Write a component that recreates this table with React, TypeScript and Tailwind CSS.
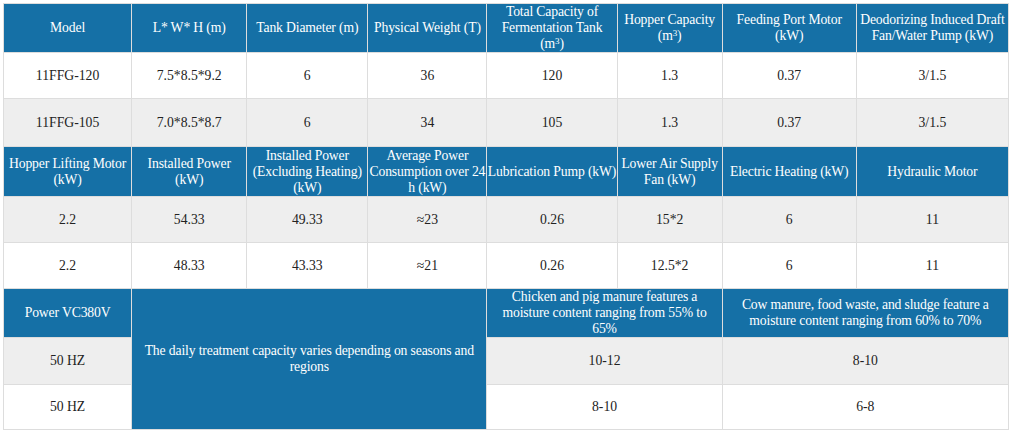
const head = "bg-[#1570a6] text-white border border-[#dddddd] text-center align-middle font-normal px-0 tracking-[-0.15px]";
const cell = "border border-[#dddddd] text-center align-middle text-[#222222] px-0";

const widths = [128, 115, 121, 119, 130, 105, 134, 152];

const Sup = () => (
  <>
    m<sup className="text-[9px] leading-none">3</sup>
  </>
);

export default function App() {
  return (
    <div className="bg-white w-[1014px] h-[433px] pl-[3px] pt-[3px] font-[family-name:'Liberation_Serif',serif] text-[13.7px] leading-[16px]">
      <table className="table-fixed border-collapse w-[1006px]">
        <colgroup>
          {widths.map((w, i) => (
            <col key={i} style={{ width: w }} />
          ))}
        </colgroup>
        <tbody>
          <tr className="h-[48px]">
            <th className={head}>Model</th>
            <th className={head}>L* W* H (m)</th>
            <th className={head}>Tank Diameter (m)</th>
            <th className={head}>Physical Weight (T)</th>
            <th className={`${head} px-2`}>
              Total Capacity of Fermentation Tank (<Sup />)
            </th>
            <th className={head}>
              Hopper Capacity (<Sup />)
            </th>
            <th className={head}>Feeding Port Motor (kW)</th>
            <th className={head}>Deodorizing Induced Draft Fan/Water Pump (kW)</th>
          </tr>
          <tr className="h-[46px] bg-white">
            {["11FFG-120", "7.5*8.5*9.2", "6", "36", "120", "1.3", "0.37", "3/1.5"].map((v, i) => (
              <td key={i} className={cell}>{v}</td>
            ))}
          </tr>
          <tr className="h-[48px] bg-[#eeeeee]">
            {["11FFG-105", "7.0*8.5*8.7", "6", "34", "105", "1.3", "0.37", "3/1.5"].map((v, i) => (
              <td key={i} className={cell}>{v}</td>
            ))}
          </tr>
          <tr className="h-[50px]">
            <th className={head}>Hopper Lifting Motor (kW)</th>
            <th className={head}>Installed Power (kW)</th>
            <th className={head}>Installed Power (Excluding Heating) (kW)</th>
            <th className={head}>Average Power Consumption over 24 h (kW)</th>
            <th className={`${head} whitespace-nowrap`}>Lubrication Pump (kW)</th>
            <th className={head}>Lower Air Supply Fan (kW)</th>
            <th className={head}>Electric Heating (kW)</th>
            <th className={head}>Hydraulic Motor</th>
          </tr>
          <tr className="h-[46px] bg-[#eeeeee]">
            {["2.2", "54.33", "49.33", "≈23", "0.26", "15*2", "6", "11"].map((v, i) => (
              <td key={i} className={cell}>{v}</td>
            ))}
          </tr>
          <tr className="h-[46px] bg-white">
            {["2.2", "48.33", "43.33", "≈21", "0.26", "12.5*2", "6", "11"].map((v, i) => (
              <td key={i} className={cell}>{v}</td>
            ))}
          </tr>
          <tr className="h-[47px]">
            <th className={head}>Power VC380V</th>
            <td rowSpan={3} colSpan={3} className={`${head} px-1`}>
              The daily treatment capacity varies depending on seasons and regions
            </td>
            <th colSpan={2} className={`${head} px-3`}>
              Chicken and pig manure features a moisture content ranging from 55% to 65%
            </th>
            <th colSpan={2} className={`${head} px-2`}>
              Cow manure, food waste, and sludge feature a moisture content ranging from 60% to 70%
            </th>
          </tr>
          <tr className="h-[47px] bg-[#eeeeee]">
            <td className={cell}>50 HZ</td>
            <td colSpan={2} className={cell}>10-12</td>
            <td colSpan={2} className={cell}>8-10</td>
          </tr>
          <tr className="h-[45px] bg-white">
            <td className={cell}>50 HZ</td>
            <td colSpan={2} className={cell}>8-10</td>
            <td colSpan={2} className={cell}>6-8</td>
          </tr>
        </tbody>
      </table>
    </div>
  );
}
